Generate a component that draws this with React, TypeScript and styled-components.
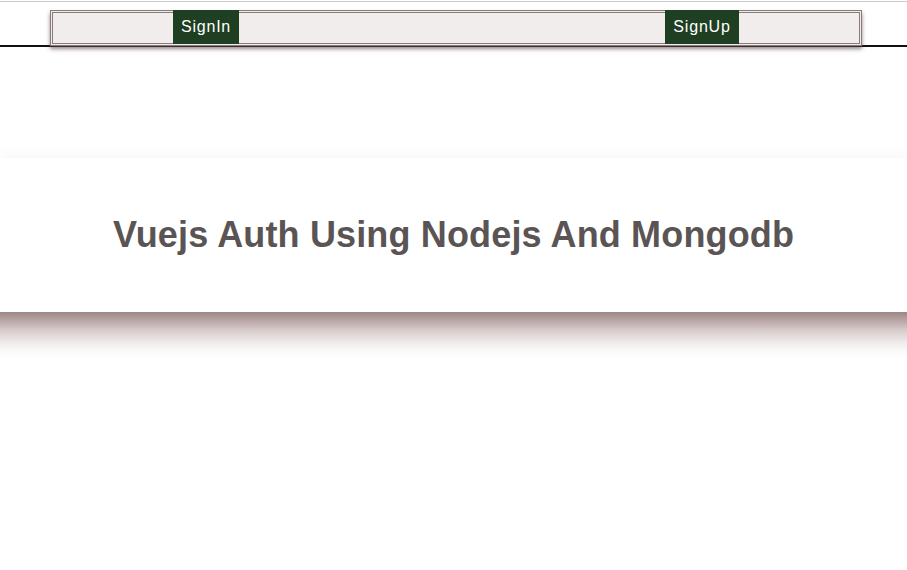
import React from "react";
import styled, { createGlobalStyle } from "styled-components";

const GlobalStyle = createGlobalStyle`
  html, body {
    margin: 0;
    padding: 0;
    background: #ffffff;
    font-family: "Liberation Sans", Arial, Helvetica, sans-serif;
  }
  * { box-sizing: border-box; }
`;

const Page = styled.div`
  padding-top: 1px;
  width: 100%;
  min-height: 570px;
  background: #ffffff;
`;

const Header = styled.header`
  height: 46px;
  border-top: 1px solid #c9c9c9;
  border-bottom: 2px solid #111111;
  display: flex;
  align-items: flex-start;
`;

const NavBox = styled.nav`
  flex: 1;
  margin: 8px 45px 0 50px;
  height: 36px;
  border: 3px double #8a7b7b;
  background: #f1eded;
  box-shadow: 0 3px 4px rgba(90, 70, 70, 0.65);
  display: flex;
  justify-content: space-between;
  align-items: flex-start;
  padding: 0 120px;
`;

const NavButton = styled.a<{ $w: number }>`
  display: block;
  width: ${(p) => p.$w}px;
  height: 34px;
  margin-top: -3px;
  background: #1f3f22;
  color: #ffffff;
  font-family: "Liberation Sans", Arial, Helvetica, sans-serif;
  font-size: 16px;
  letter-spacing: 0.8px;
  line-height: 34px;
  text-align: center;
  text-decoration: none;
  cursor: pointer;
`;

const Spacer = styled.div`
  height: 111px;
`;

const Banner = styled.section`
  height: 154px;
  background: #ffffff;
  box-shadow: 0 -6px 8px rgba(0, 0, 0, 0.025);
  display: flex;
  align-items: center;
  justify-content: center;
`;

const Title = styled.h1`
  margin: 0;
  font-family: "Liberation Sans", Arial, Helvetica, sans-serif;
  font-weight: 700;
  font-size: 36px;
  color: #5a5454;
  letter-spacing: 0.15px;
`;

const BannerShade = styled.div`
  height: 46px;
  background: linear-gradient(
    to bottom,
    #9d8585 0%,
    #b8a4a4 18%,
    #d8cccc 40%,
    #efe9e9 65%,
    #fbfafa 85%,
    #ffffff 100%
  );
`;

export default function App() {
  return (
    <>
      <GlobalStyle />
      <Page>
        <Header>
          <NavBox>
            <NavButton $w={66}>SignIn</NavButton>
            <NavButton $w={74}>SignUp</NavButton>
          </NavBox>
        </Header>
        <Spacer />
        <Banner>
          <Title>Vuejs Auth Using Nodejs And Mongodb</Title>
        </Banner>
        <BannerShade />
      </Page>
    </>
  );
}
